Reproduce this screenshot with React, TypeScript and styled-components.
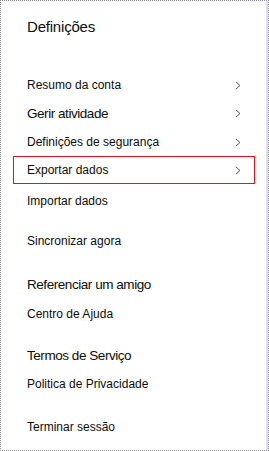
import * as React from 'react';
import styled, { createGlobalStyle } from 'styled-components';

const Global = createGlobalStyle`
  html, body { margin: 0; padding: 0; background: #fff; }
  * { box-sizing: border-box; }
`

// Outer frame with dotted edge
const Frame = styled.div`
  width: 269px;
  height: 451px;
  border: 1px dotted #8a8a9a;
  background: #fff;
  display: flex;
  font-family: "Liberation Sans", Arial, sans-serif;
  color: #0d0d0d;
`

const Panel = styled.div`
  flex: 1;
  display: flex;
  flex-direction: column;
  padding: 12px 0 0 12px;
`

const Strip = styled.div`
  width: 2px;
  background: #dcdcf6;
`

const Title = styled.h1`
  margin: 0 0 30px 14px;
  height: 28px;
  line-height: 28px;
  font-size: 15px;
  font-weight: 400;
  letter-spacing: -0.2px;
`

// Navigation list
const List = styled.ul`
  list-style-type: none;
  margin: 0;
  padding: 0;
  display: flex;
  flex-direction: column;
`

const Item = styled.li<{ $gap: number; $large?: boolean; $active?: boolean }>`
  display: flex;
  align-items: center;
  justify-content: space-between;
  width: 242px;
  height: 28px;
  margin-top: ${p => p.$gap}px;
  padding: 0 13px 0 14px;
  font-size: ${p => (p.$large ? '13.5px' : '12px')};
  letter-spacing: ${p => (p.$large ? '-0.45px' : '0')};
  border: 1px solid ${p => (p.$active ? '#e81123' : 'transparent')};
  padding-left: 13px;
`

const Chevron = () => (
  <svg width="6" height="9" viewBox="0 0 6 9">
    <polyline points="1,1 5,4.5 1,8" fill="none" stroke="#5a5a5a" strokeWidth="1" />
  </svg>
)

const items: { label: string; gap: number; large?: boolean; arrow?: boolean; active?: boolean }[] = [
  { label: 'Resumo da conta', gap: 0, arrow: true },
  { label: 'Gerir atividade', gap: 0, large: true, arrow: true },
  { label: 'Definições de segurança', gap: 1, arrow: true },
  { label: 'Exportar dados', gap: 0, arrow: true, active: true },
  { label: 'Importar dados', gap: 3 },
  { label: 'Sincronizar agora', gap: 12 },
  { label: 'Referenciar um amigo', gap: 15, large: true },
  { label: 'Centro de Ajuda', gap: 2 },
  { label: 'Termos de Serviço', gap: 13, large: true },
  { label: 'Politica de Privacidade', gap: 1 },
  { label: 'Terminar sessão', gap: 15 },
]

export default () => (
  <>
    <Global />
    <Frame>
      <Panel>
        <Title>Definições</Title>
        <List>
          {items.map(it => (
            <Item key={it.label} $gap={it.gap} $large={it.large} $active={it.active}>
              <span>{it.label}</span>
              {it.arrow && <Chevron />}
            </Item>
          ))}
        </List>
      </Panel>
      <Strip />
    </Frame>
  </>
)
